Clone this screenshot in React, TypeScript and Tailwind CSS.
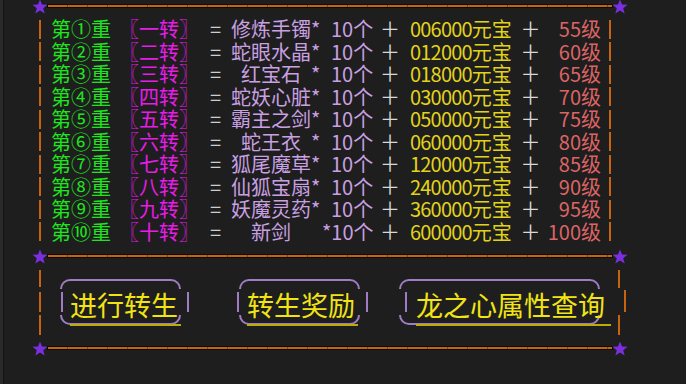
import React from "react";

const rows: [string, string, string, string, string][] = [
  ["①", "一", "修炼手镯", "006000", "55"],
  ["②", "二", "蛇眼水晶", "012000", "60"],
  ["③", "三", "红宝石", "018000", "65"],
  ["④", "四", "蛇妖心脏", "030000", "70"],
  ["⑤", "五", "霸主之剑", "050000", "75"],
  ["⑥", "六", "蛇王衣", "060000", "80"],
  ["⑦", "七", "狐尾魔草", "120000", "85"],
  ["⑧", "八", "仙狐宝扇", "240000", "90"],
  ["⑨", "九", "妖魔灵药", "360000", "95"],
  ["⑩", "十", "新剑", "600000", "100"],
];

function Star() {
  return (
    <svg width="16" height="15" viewBox="0 0 16 15" className="shrink-0">
      <polygon
        points="8,0.5 10,5.6 15.5,5.8 11.2,9.2 12.7,14.5 8,11.4 3.3,14.5 4.8,9.2 0.5,5.8 6,5.6"
        fill="#7b2fe0"
      />
    </svg>
  );
}

function HLine() {
  return (
    <div className="flex items-center h-[12px] ml-[32px]">
      <Star />
      <div className="w-[564px] h-[2px] bg-[repeating-linear-gradient(90deg,#c8640f_0px,#c8640f_19px,#8a4208_19px,#8a4208_20px)] shadow-[0_0_0_1px_#0c0c0c]" />
      <Star />
    </div>
  );
}

function VBar({ h }: { h: string }) {
  return <div className={`w-[2px] bg-[#c8640f] ${h}`} />;
}

function Row({ r }: { r: [string, string, string, string, string] }) {
  const [circ, zhuan, item, money, lvl] = r;
  const isNew = item === "新剑";
  return (
    <div className="flex items-center h-[22.5px] leading-[22.5px] text-[20px] whitespace-nowrap">
      <div className="ml-[39px] w-[2px] h-[19px] bg-[#c8640f]" />
      <div className="w-[78px] pl-[10px] text-[#1ee61e]">第{circ}重</div>
      <div className="w-[86px] text-[#e81be8]">〖{zhuan}转〗</div>
      <div className="w-[26px] pr-[5px] text-center text-[#cfcfcf]">=</div>
      <div className="w-[80px] text-center text-[#c9a0e2]">{item}</div>
      <div className="w-[20px] text-[#c9a0e2]">{isNew ? "" : "*"}</div>
      <div className={`w-[49px] text-[#c9a0e2] ${isNew ? "-ml-[9px]" : ""}`}>{isNew ? "*10个" : "10个"}</div>
      {isNew && <div className="w-[9px]" />}
      <div className="w-[20px] text-center text-[#d8d8d8]">＋</div>
      <div className="w-[120px] pl-[10px] text-[#e2d31a]">
        <span className="tracking-[-0.8px]">{money}</span>元宝
      </div>
      <div className="w-[21px] text-center text-[#d8d8d8]">＋</div>
      <div className="w-[60px] text-right text-[#dc6464]">{lvl}级</div>
      <div className="ml-[8px] w-[2px] h-[19px] bg-[#c8640f]" />
    </div>
  );
}

function Frame() {
  return (
    <>
      <div className="absolute top-0 inset-x-0 h-[10px] border-t-2 border-x-2 rounded-t-[11px] border-[#a07cc6]" />
      <div className="absolute bottom-0 inset-x-0 h-[10px] border-b-2 border-x-2 rounded-b-[11px] border-[#a07cc6]" />
    </>
  );
}

function BtnText({ children, extra }: { children: React.ReactNode; extra?: string }) {
  return (
    <span
      className={`relative top-[3px] text-[27px] leading-[32px] text-[#f2e414] border-b-2 border-[#bcac06] whitespace-nowrap ${extra ?? ""}`}
    >
      {children}
    </span>
  );
}

function PBar({ cls }: { cls?: string }) {
  return <div className={`w-[2px] h-[20px] bg-[#a07cc6] shrink-0 ${cls ?? ""}`} />;
}

export default function App() {
  return (
    <div className="w-[686px] h-[384px] bg-[#1e1e1e] relative overflow-hidden font-['Noto_Sans_CJK_SC',sans-serif]">
      <div className="absolute left-0 top-0 bottom-0 w-[4px] bg-[#2a2a2a] border-r border-[#141414]" />
      <HLine />
      <div className="mt-[6px]">
        {rows.map((r) => (
          <Row key={r[0]} r={r} />
        ))}
      </div>
      <div className="mt-[7px]">
        <HLine />
      </div>
      <div className="flex items-center h-[80px]">
        <div className="ml-[39px] w-[2px] h-full flex flex-col pt-[8px]">
          <VBar h="h-[17px]" />
          <div className="mt-[5px]"><VBar h="h-[20px]" /></div>
          <div className="mt-[3px]"><VBar h="h-[20px]" /></div>
        </div>

        <div className="ml-[19px] relative w-[121px] h-[46px] flex items-center">
          <Frame />
          <PBar cls="ml-[1px]" />
          <div className="ml-[7px]">
            <BtnText extra="pr-[3px]">进行转生</BtnText>
          </div>
        </div>
        <PBar cls="ml-[6px]" />

        <PBar cls="ml-[48px]" />
        <div className="relative w-[121px] h-[46px] flex items-center">
          <Frame />
          <div className="ml-[8px]">
            <BtnText extra="pr-[3px]">转生奖励</BtnText>
          </div>
        </div>
        <PBar cls="ml-[6px]" />

        <div className="ml-[31px] relative w-[201px] h-[46px] flex items-center">
          <Frame />
          <PBar cls="ml-[6px]" />
          <div className="ml-[9px]">
            <BtnText extra="pr-[6px]">龙之心属性查询</BtnText>
          </div>
        </div>

        <div className="ml-[18px] w-[8px] h-full flex flex-col items-start pt-[8px]">
          <VBar h="h-[18px]" />
          <div className="mt-[2px] ml-[6px]"><VBar h="h-[22px]" /></div>
          <div className="mt-[3px]"><VBar h="h-[20px]" /></div>
        </div>
      </div>
      <HLine />
    </div>
  );
}
